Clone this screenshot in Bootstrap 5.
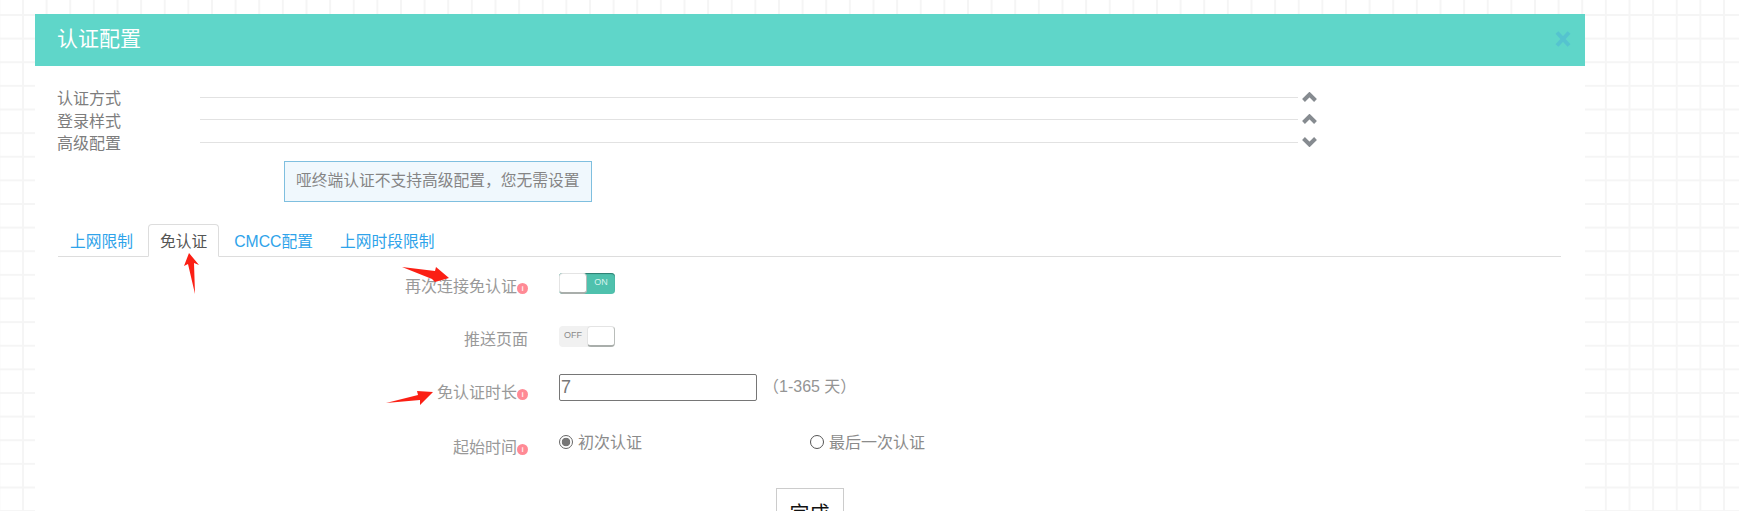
<!DOCTYPE html>
<html lang="zh-CN">
<head>
  <meta charset="UTF-8" />
  <meta name="viewport" content="width=device-width, initial-scale=1" />
  <title>认证配置</title>
  <link href="https://cdn.jsdelivr.net/npm/bootstrap@5.3.0/dist/css/bootstrap.min.css" rel="stylesheet" />
  <style>
    html, body { height: 511px; overflow: hidden; }
    body {
      position: relative;
      padding-top: 14px;
      font-family: "Liberation Sans", "Noto Sans CJK SC", sans-serif;
      font-size: 16px;
      line-height: 22px;
      color: #8b8b8b;
      background-color: #fff;
      background-image:
        linear-gradient(to right, #f5f5f5 2px, transparent 2px),
        linear-gradient(to bottom, #f5f5f5 2px, transparent 2px);
      background-size: 23.63px 23.63px;
      background-position: 22px 14px;
    }
    .panel-box { margin-left: 35px; width: 1550px; height: 600px; background: #fff; }
    .panel-head { height: 52px; padding: 0 14px 2px 22px; background: #5fd6c9; color: #fff; font-size: 21px; }
    .panel-body { padding: 22px 24px 0 23px; }

    .fold-row { height: 22.5px; }
    .fold-label { width: 143px; margin-left: -1px; color: #7d7d7d; }
    .fold-line { width: 1098px; height: 1px; margin-bottom: 4px; background: #e2e2e2; }
    .fold-icon { width: 15px; height: 10px; margin: 0 0 5px 4px; }

    .tip-box {
      width: 308px; height: 41px; margin: 5px 0 22px 226px; padding-left: 11px;
      background: #f0f8fd; border: 1px solid #7fbfdf; color: #858585; font-size: 15.75px;
    }

    .nav-tabs { border-bottom: 1px solid #ddd; --bs-nav-tabs-border-radius: 4px; }
    .nav-tabs .nav-link {
      margin-right: 3px; margin-bottom: -1px; padding: 6px 11px 5px; height: 33px;
      font-size: 15.75px; line-height: 22px; color: #2ea3ea; border: 1px solid transparent;
    }
    .nav-tabs .nav-link.active { color: #555; border-color: #ddd #ddd #fff; }

    .form-name { width: 470px; text-align: right; color: #999; }
    .form-ctrl { margin-left: 31px; }
    .line-one { height: 53px; margin-top: 16px; }
    .line-one .form-name, .line-two .form-name { padding-top: 3px; }
    .line-two { height: 48px; }
    .line-three { height: 58px; }
    .line-three .form-name { padding-top: 8px; }
    .line-four { height: 56px; }
    .line-four .form-name { padding-top: 5px; }
    .info-dot {
      display: inline-flex; align-items: center; justify-content: center;
      width: 11px; height: 11px; border-radius: 50%;
      background: #ff8a95; color: #ffe9eb; font-size: 8px; line-height: 1; font-weight: 700;
      vertical-align: 1px;
    }

    .sw-track {
      display: flex; width: 56px; height: 21px; border-radius: 4px;
      font-size: 9px; line-height: 19px;
    }
    .sw-on { background: #4fc1ad; color: #d8f3ee; box-shadow: inset 0 1px 1px #2d7d70; }
    .sw-off { background: #f1f1f1; color: #8a8a8a; }
    .sw-knob {
      width: 28px; height: 21px; background: #fff; border-radius: 4px;
      border: 1px solid #e4e4e4; border-bottom: 2px solid #a9aeab; border-right-color: #b9bdba;
    }
    .sw-text { flex: 1; text-align: center; }

    .days-input {
      width: 198px; height: 27px; padding: 0 1px; border: 1px solid #767676; border-radius: 2px;
      font-size: 18px; color: #777;
    }
    .days-input:focus { border-color: #767676; box-shadow: none; color: #777; }
    .days-note { margin: 0 0 0 6px; line-height: 26px; color: #949494; }

    .pick-radio {
      width: 14px; height: 14px; margin: 3px 5px 0 0; flex-shrink: 0; float: none;
      background: #fff; border: 1px solid #555;
    }
    .pick-radio:checked {
      background: radial-gradient(circle, #777 4px, #fff 4.6px); border-color: #666;
    }
    .pick-item { width: 251px; }

    .done-btn {
      padding: 10px 13px; border: 1px solid #ccc; border-radius: 0;
      background: #fff; color: #111; font-size: 20px; line-height: 30px;
    }
    .red-arrows { position: absolute; left: 0; top: 0; pointer-events: none; }
  </style>
</head>
<body>
  <div class="panel-box">
    <div class="panel-head d-flex align-items-center justify-content-between">
      <span>认证配置</span>
      <svg width="16" height="18" viewBox="0 0 16 18" aria-hidden="true">
        <path d="M2 2.5 14 15.5M14 2.5 2 15.5" fill="none" stroke="#55c3cf" stroke-width="4" />
      </svg>
    </div>

    <div class="panel-body">
      <!-- 折叠标题 -->
      <div class="fold-row d-flex align-items-center">
        <span class="fold-label">认证方式</span>
        <span class="fold-line"></span>
        <svg class="fold-icon" viewBox="0 0 15 10"><path d="M1.5 8.5 7.5 2.5 13.5 8.5" fill="none" stroke="#868b90" stroke-width="4" /></svg>
      </div>
      <div class="fold-row d-flex align-items-center">
        <span class="fold-label">登录样式</span>
        <span class="fold-line"></span>
        <svg class="fold-icon" viewBox="0 0 15 10"><path d="M1.5 8.5 7.5 2.5 13.5 8.5" fill="none" stroke="#868b90" stroke-width="4" /></svg>
      </div>
      <div class="fold-row d-flex align-items-center">
        <span class="fold-label">高级配置</span>
        <span class="fold-line"></span>
        <svg class="fold-icon" viewBox="0 0 15 10"><path d="M1.5 1.5 7.5 7.5 13.5 1.5" fill="none" stroke="#868b90" stroke-width="4" /></svg>
      </div>

      <div class="tip-box d-flex align-items-center">哑终端认证不支持高级配置，您无需设置</div>

      <ul class="nav nav-tabs">
        <li class="nav-item"><a class="nav-link" href="#">上网限制</a></li>
        <li class="nav-item"><a class="nav-link active" href="#">免认证</a></li>
        <li class="nav-item"><a class="nav-link" href="#">CMCC配置</a></li>
        <li class="nav-item"><a class="nav-link" href="#">上网时段限制</a></li>
      </ul>

      <div class="line-one d-flex align-items-start">
        <div class="form-name">再次连接免认证<span class="info-dot">i</span></div>
        <div class="form-ctrl">
          <div class="sw-track sw-on"><span class="sw-knob"></span><span class="sw-text">ON</span></div>
        </div>
      </div>

      <div class="line-two d-flex align-items-start">
        <div class="form-name">推送页面</div>
        <div class="form-ctrl">
          <div class="sw-track sw-off"><span class="sw-text">OFF</span><span class="sw-knob"></span></div>
        </div>
      </div>

      <div class="line-three d-flex align-items-start">
        <div class="form-name">免认证时长<span class="info-dot">i</span></div>
        <div class="form-ctrl d-flex">
          <input type="text" class="form-control days-input" value="7" />
          <p class="days-note">（1-365 天）</p>
        </div>
      </div>

      <div class="line-four d-flex align-items-start">
        <div class="form-name">起始时间<span class="info-dot">i</span></div>
        <div class="form-ctrl d-flex">
          <label class="pick-item d-flex"><input class="form-check-input pick-radio" type="radio" name="start" checked />初次认证</label>
          <label class="d-flex"><input class="form-check-input pick-radio" type="radio" name="start" />最后一次认证</label>
        </div>
      </div>

      <div class="text-center">
        <button type="button" class="btn done-btn">完成</button>
      </div>
    </div>
  </div>

  <!-- 截图上的红色标注箭头 -->
  <svg class="red-arrows" width="1739" height="511" viewBox="0 0 1739 511" aria-hidden="true">
    <path fill="#fb1f14" d="M189 253 184 266 188 264 195 294 194 263 199 265Z" />
    <path fill="#fb1f14" d="M402 267 435 271 436 267 449 278 435 282 432 279Z" />
    <path fill="#fb1f14" d="M386 403 418 395 417 391 433 392 420 405 420 400Z" />
  </svg>

  <script src="https://cdn.jsdelivr.net/npm/bootstrap@5.3.0/dist/js/bootstrap.bundle.min.js"></script>
</body>
</html>
